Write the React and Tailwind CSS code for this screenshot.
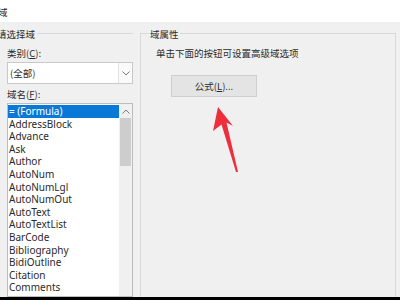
import React from "react";

const FIELDS = [
  "= (Formula)",
  "AddressBlock",
  "Advance",
  "Ask",
  "Author",
  "AutoNum",
  "AutoNumLgl",
  "AutoNumOut",
  "AutoText",
  "AutoTextList",
  "BarCode",
  "Bibliography",
  "BidiOutline",
  "Citation",
  "Comments",
  "Compare",
  "CreateDate",
];

const cjk = { fontFamily: '"Noto Sans CJK SC", "Noto Sans", sans-serif' };
const latin = { fontFamily: '"Noto Sans", "Noto Sans CJK SC", sans-serif' };

function Chevron({ up = false }) {
  return (
    <svg width="8" height="5" viewBox="0 0 8 5" className="block">
      <path
        d={up ? "M0.5 4.5 L4 1 L7.5 4.5" : "M0.5 0.5 L4 4 L7.5 0.5"}
        fill="none"
        stroke="#7a7a7a"
        strokeWidth="1"
      />
    </svg>
  );
}

export default function App() {
  return (
    <div
      className="relative flex h-[300px] w-[400px] flex-col overflow-hidden bg-[#f0f0f0] text-[#2a2a2a]"
      style={cjk}
    >
      <div className="flex h-[22px] shrink-0 items-center bg-white pt-[2px] text-[9.5px] leading-[12px]">
        <span className="-ml-[2px]">域</span>
      </div>

      <div className="flex min-h-0 flex-1">
        {/* left group */}
        <div className="flex w-[133px] shrink-0 flex-col pt-[11px]">
          <div className="flex min-h-0 flex-1 flex-col border-t border-[#d9d9d9]">
            <span className="-ml-[3px] -mt-[6px] w-fit bg-[#f0f0f0] pr-[2px] text-[9.5px] leading-[12px]">
              请选择域
            </span>
            <div className="flex min-h-0 flex-1 flex-col pl-[7px]">
              <span className="mt-[7px] text-[9.5px] leading-[12px]">
                类别(<span className="underline">C</span>):
              </span>
              <div className="mt-[3px] flex h-[22px] shrink-0 border border-[#c9c9c9] bg-white">
                <span className="flex flex-1 items-center pl-[2px] text-[9.5px]">(全部)</span>
                <div className="flex w-[14px] items-center justify-center border-l border-[#e2e2e2] bg-[#fafafa]">
                  <Chevron />
                </div>
              </div>
              <span className="mt-[4px] text-[9.5px] leading-[12px]">
                域名(<span className="underline">F</span>):
              </span>
              <div className="mt-[3px] flex min-h-0 flex-1 overflow-hidden border border-[#bdbdbd] bg-white">
                <div className="flex-1 overflow-hidden pt-[1px]" style={latin}>
                  {FIELDS.map((f, i) => (
                    <div
                      key={f}
                      className={
                        i === 0
                          ? "h-[12.6px] bg-[#0a78d7] pl-[1px] text-[10px] leading-[12.6px] text-white"
                          : "h-[12.6px] pl-[1px] text-[10px] leading-[12.6px] text-[#2a2a2a]"
                      }
                    >
                      {f}
                    </div>
                  ))}
                </div>
                <div className="flex w-[13px] shrink-0 flex-col bg-[#f0f0f0] pt-[1px]">
                  <div className="flex h-[13px] items-center justify-center">
                    <Chevron up />
                  </div>
                  <div className="mx-[1px] h-[48px] bg-[#cdcdcd]" />
                </div>
              </div>
            </div>
          </div>
        </div>

        {/* right group */}
        <div className="ml-[7px] flex w-[256px] shrink-0 flex-col pt-[11px]">
          <div className="flex flex-1 flex-col border-l border-r border-t border-[#d9d9d9]">
            <span className="-mt-[6px] ml-[8px] w-fit bg-[#f0f0f0] px-[1px] text-[9.5px] leading-[12px]">
              域属性
            </span>
            <span className="ml-[15px] mt-[7px] text-[9.5px] leading-[12px]">
              单击下面的按钮可设置高级域选项
            </span>
            <button
              type="button"
              className="ml-[30px] mt-[16px] flex h-[22px] w-[86px] items-center justify-center border border-[#cfcfcf] bg-[#e4e4e4] text-[9.5px] text-[#2a2a2a]"
            >
              公式(<span className="underline">L</span>)...
            </button>
          </div>
        </div>
      </div>

      <div className="h-[3px] shrink-0 bg-black" />

      {/* red annotation arrow */}
      <svg
        className="pointer-events-none absolute left-0 top-0"
        width="400"
        height="300"
        viewBox="0 0 400 300"
      >
        <polygon
          points="218,107 233,126 226.5,122.5 238,172 236,172 221.5,124.5 213,131"
          fill="#ec2f3b"
        />
      </svg>
    </div>
  );
}
